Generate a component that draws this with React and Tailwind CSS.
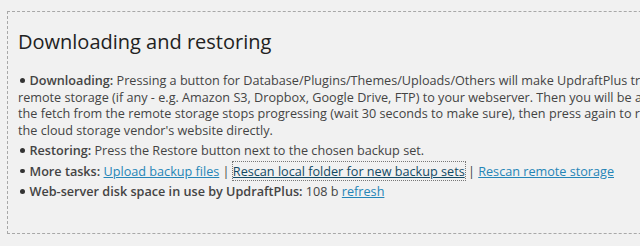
const linkClass = "text-[#2585b7] underline";

const Bullet = () => (
  <span className="inline-block w-[4.5px] h-[4.5px] rounded-full bg-[#333] align-middle ml-[2px] mr-[5px] relative -top-[1px]" />
);

const App = () => {
  return (
    <div
      className="w-[640px] h-[246px] overflow-hidden bg-[#f1f1f1] pt-[11px] pl-[7px] text-[12.65px] text-[#444]"
      style={{ fontFamily: '"Open Sans", "Liberation Sans", sans-serif' }}
    >
      <div className="w-[720px] h-[223px] border border-dashed border-[#a8a8a8] pl-[10px] pt-[17px]">
        <h2 className="text-[20px] leading-[26px] text-[#222] font-normal">
          Downloading and restoring
        </h2>
        <ul className="mt-[17px] whitespace-nowrap leading-[16.5px]">
          <li className="mb-[4px]">
            <Bullet />
            <strong className="font-semibold">Downloading:</strong> Pressing a
            button for Database/Plugins/Themes/Uploads/Others will make
            UpdraftPlus try to fetch the backup file from the
            <br />
            remote storage (if any - e.g. Amazon S3, Dropbox, Google Drive, FTP)
            to your webserver. Then you will be allowed to download it to your
            computer. If
            <br />
            the fetch from the remote storage stops progressing (wait 30 seconds
            to make sure), then press again to resume. Remember that you can
            also visit
            <br />
            the cloud storage vendor's website directly.
          </li>
          <li className="mb-[4px]">
            <Bullet />
            <strong className="font-semibold">Restoring:</strong> Press the
            Restore button next to the chosen backup set.
          </li>
          <li className="mb-[4px]">
            <Bullet />
            <strong className="font-semibold">More tasks:</strong>{" "}
            <a href="#" className={linkClass}>
              Upload backup files
            </a>{" "}
            |{" "}
            <a
              href="#"
              className="text-[#124964] underline outline-1 outline-dotted outline-[#777]"
            >
              Rescan local folder for new backup sets
            </a>{" "}
            |{" "}
            <a href="#" className={linkClass}>
              Rescan remote storage
            </a>
          </li>
          <li className="mb-[4px]">
            <Bullet />
            <strong className="font-semibold">
              Web-server disk space in use by UpdraftPlus:
            </strong>{" "}
            108 b{" "}
            <a href="#" className={linkClass}>
              refresh
            </a>
          </li>
        </ul>
      </div>
    </div>
  );
};

export default App;
